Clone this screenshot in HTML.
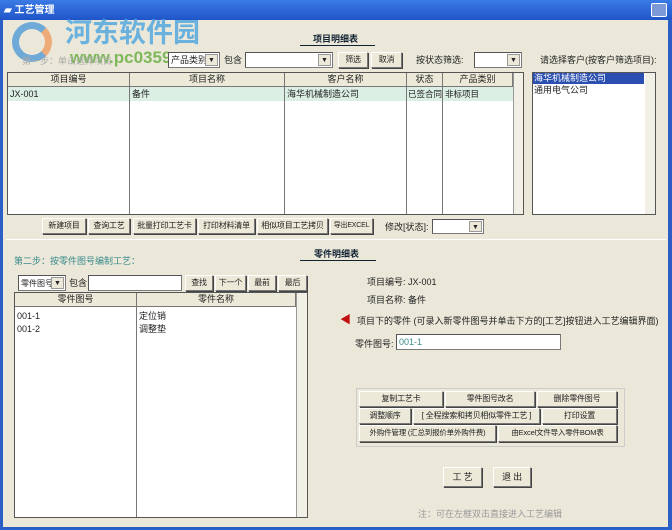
<!DOCTYPE html>
<html><head><meta charset="utf-8"><style>
*{box-sizing:border-box;margin:0;padding:0}
body{width:672px;height:530px;overflow:hidden;background:#2b5fc6;font-family:"Liberation Sans","Noto Sans CJK SC",sans-serif;font-size:9px;color:#222;position:relative}
.a{position:absolute}
.win{left:3px;top:20px;width:665px;height:507px;background:#ebe8da}
.btn{position:absolute;background:#ece9d8;border:1px solid;border-color:#fff #777 #777 #fff;box-shadow:1px 1px 0 #444;text-align:center;font-size:8px;line-height:14px;white-space:nowrap;overflow:hidden;letter-spacing:-0.2px}
.inp{position:absolute;background:#fff;border:1px solid #7a7a7a;border-top-color:#555;border-left-color:#555}
.dd{position:absolute;right:1px;top:1px;bottom:1px;width:13px;background:#ece9d8;border:1px solid #999;font-size:7px;text-align:center;line-height:12px}
.tbl{position:absolute;background:#fff;border:1px solid #555}
.hd{position:absolute;top:0;height:14px;background:#ece9d8;border-right:1px solid #777;border-bottom:1px solid #777;text-align:center;line-height:13px}
.vl{position:absolute;width:1px;background:#777}
.t{position:absolute;white-space:nowrap;line-height:11px}
</style></head><body>
<div class="a" style="left:0;top:0;width:672px;height:20px;background:linear-gradient(#3a7be6,#1f54c8)"></div>
<div class="t" style="left:4px;top:5px;color:#fff;font-weight:bold;font-size:10px">▰ 工艺管理</div>
<div class="a" style="left:651px;top:3px;width:16px;height:14px;background:#7d99d8;border:1px solid #fff;border-radius:2px"></div>
<div class="win a"></div>

<div class="t" style="left:65px;top:18px;font-size:27px;line-height:30px;font-weight:bold;color:#4aa4e0;opacity:.8">河东软件园</div>
<div class="a" style="left:12px;top:22px;width:40px;height:40px;border-radius:50%;border:7px solid #3a8fd8;border-right-color:#f09050;opacity:.7"></div>
<div class="t" style="left:70px;top:48px;font-size:17px;line-height:20px;font-weight:bold;color:#5aa830;opacity:.75">www.pc0359</div>
<div class="t" style="left:22px;top:56px;color:#aaa">第一步：单击选择项目</div>

<div class="t" style="left:313px;top:34px;font-weight:bold;color:#123">项目明细表</div>
<div class="a" style="left:300px;top:45px;width:75px;height:1px;background:#123"></div>

<div class="inp" style="left:168px;top:52px;width:52px;height:16px"><span class="t" style="left:2px;top:2px">产品类别</span><div class="dd">▼</div></div>
<div class="t" style="left:224px;top:55px">包含</div>
<div class="inp" style="left:245px;top:52px;width:88px;height:16px"><div class="dd">▼</div></div>
<div class="btn" style="left:338px;top:52px;width:30px;height:16px">筛选</div>
<div class="btn" style="left:371px;top:52px;width:31px;height:16px">取消</div>
<div class="t" style="left:416px;top:55px">按状态筛选:</div>
<div class="inp" style="left:474px;top:52px;width:48px;height:16px"><div class="dd">▼</div></div>
<div class="t" style="left:540px;top:55px">请选择客户(按客户筛选项目):</div>

<div class="tbl" style="left:7px;top:72px;width:517px;height:143px">
<div class="hd" style="left:0;width:122px">项目编号</div>
<div class="hd" style="left:122px;width:155px">项目名称</div>
<div class="hd" style="left:277px;width:122px">客户名称</div>
<div class="hd" style="left:399px;width:36px">状态</div>
<div class="hd" style="left:435px;width:70px">产品类别</div>
<div class="a" style="left:505px;top:0;width:10px;height:141px;background:#f1efe6;border-left:1px solid #999"></div>
<div class="a" style="left:0;top:14px;width:505px;height:14px;background:#dcefe4"></div>
<div class="vl" style="left:121px;top:14px;height:127px"></div>
<div class="vl" style="left:276px;top:14px;height:127px"></div>
<div class="vl" style="left:398px;top:14px;height:127px"></div>
<div class="vl" style="left:434px;top:14px;height:127px"></div>
<div class="t" style="left:2px;top:16px">JX-001</div>
<div class="t" style="left:124px;top:16px">备件</div>
<div class="t" style="left:279px;top:16px">海华机械制造公司</div>
<div class="t" style="left:400px;top:16px;font-size:8.5px">已签合同</div>
<div class="t" style="left:437px;top:16px;font-size:8.5px">非标项目</div>
</div>

<div class="tbl" style="left:532px;top:72px;width:124px;height:143px">
<div class="a" style="left:0;top:0;width:111px;height:11px;background:#2a4fb0"></div>
<div class="t" style="left:1px;top:0;color:#fff">海华机械制造公司</div>
<div class="t" style="left:1px;top:12px">通用电气公司</div>
<div class="a" style="left:112px;top:0;width:10px;height:141px;background:#f1efe6"></div>
</div>

<div class="btn" style="left:42px;top:218px;width:44px;height:16px">新建项目</div>
<div class="btn" style="left:88px;top:218px;width:42px;height:16px">查询工艺</div>
<div class="btn" style="left:133px;top:218px;width:63px;height:16px">批量打印工艺卡</div>
<div class="btn" style="left:198px;top:218px;width:57px;height:16px">打印材料清单</div>
<div class="btn" style="left:257px;top:218px;width:71px;height:16px">相似项目工艺拷贝</div>
<div class="btn" style="left:330px;top:218px;width:43px;height:16px;font-size:7px">导出EXCEL</div>
<div class="t" style="left:385px;top:222px">修改[状态]:</div>
<div class="inp" style="left:432px;top:219px;width:52px;height:15px"><div class="dd">▼</div></div>
<div class="a" style="left:6px;top:239px;width:660px;height:1px;background:#aaa;border-bottom:1px solid #fff"></div>

<div class="t" style="left:314px;top:249px;font-weight:bold;color:#123">零件明细表</div>
<div class="a" style="left:300px;top:260px;width:76px;height:1px;background:#123"></div>
<div class="t" style="left:14px;top:256px;color:#3a8a8a">第二步：按零件图号编制工艺：</div>

<div class="inp" style="left:18px;top:275px;width:48px;height:16px"><span class="t" style="left:2px;top:2px;font-size:8px">零件图号</span><div class="dd">▼</div></div>
<div class="t" style="left:69px;top:278px">包含</div>
<div class="inp" style="left:88px;top:275px;width:94px;height:16px"></div>
<div class="btn" style="left:185px;top:275px;width:28px;height:16px">查找</div>
<div class="btn" style="left:215px;top:275px;width:31px;height:16px">下一个</div>
<div class="btn" style="left:248px;top:275px;width:28px;height:16px">最前</div>
<div class="btn" style="left:278px;top:275px;width:29px;height:16px">最后</div>

<div class="tbl" style="left:14px;top:292px;width:294px;height:226px">
<div class="hd" style="left:0;width:122px">零件图号</div>
<div class="hd" style="left:122px;width:159px">零件名称</div>
<div class="a" style="left:281px;top:0;width:11px;height:224px;background:#f1efe6;border-left:1px solid #999"></div>
<div class="vl" style="left:121px;top:14px;height:210px"></div>
<div class="t" style="left:2px;top:18px">001-1</div><div class="t" style="left:124px;top:18px">定位销</div>
<div class="t" style="left:2px;top:31px">001-2</div><div class="t" style="left:124px;top:31px">调整垫</div>
</div>

<div class="t" style="left:367px;top:277px">项目编号: JX-001</div>
<div class="t" style="left:367px;top:295px">项目名称: 备件</div>
<div class="t" style="left:340px;top:314px;color:#c01010;font-size:11px;line-height:13px">◀</div>
<div class="t" style="left:357px;top:316px">项目下的零件 (可录入新零件图号并单击下方的[工艺]按钮进入工艺编辑界面)</div>
<div class="t" style="left:355px;top:339px">零件图号:</div>
<div class="inp" style="left:396px;top:334px;width:165px;height:16px"><span class="t" style="left:2px;top:2px;color:#3a8a8a">001-1</span></div>

<div class="a" style="left:356px;top:388px;width:269px;height:59px;border:1px solid #ccc"></div>
<div class="btn" style="left:359px;top:391px;width:84px;height:16px">复制工艺卡</div>
<div class="btn" style="left:445px;top:391px;width:90px;height:16px">零件图号改名</div>
<div class="btn" style="left:537px;top:391px;width:80px;height:16px">删除零件图号</div>
<div class="btn" style="left:359px;top:408px;width:52px;height:16px">调整顺序</div>
<div class="btn" style="left:413px;top:408px;width:127px;height:16px">[ 全程搜索和拷贝相似零件工艺 ]</div>
<div class="btn" style="left:542px;top:408px;width:75px;height:16px">打印设置</div>
<div class="btn" style="left:359px;top:425px;width:137px;height:17px;font-size:7.5px">外购件管理 (汇总到报价单外购件费)</div>
<div class="btn" style="left:498px;top:425px;width:119px;height:17px;font-size:7.5px">由Excel文件导入零件BOM表</div>

<div class="btn" style="left:443px;top:467px;width:39px;height:20px;line-height:18px;font-size:9px">工 艺</div>
<div class="btn" style="left:493px;top:467px;width:38px;height:20px;line-height:18px;font-size:9px">退 出</div>
<div class="t" style="left:418px;top:509px;color:#999">注：可在左框双击直接进入工艺编辑</div>
</body></html>
